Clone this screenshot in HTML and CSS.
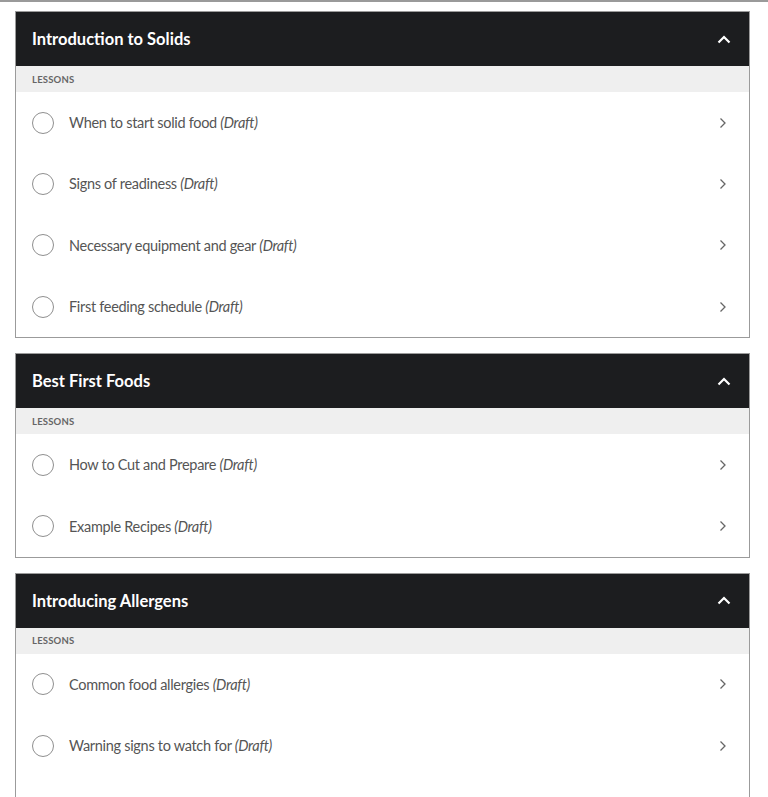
FILE: index.html
```html
<!DOCTYPE html>
<html>
<head>
<meta charset="utf-8">
<link rel="stylesheet" href="styles.css">
</head>
<body>
<div class="topline"></div>
<main class="sections">
  <section class="card">
    <header class="card-head">
      <h2>Introduction to Solids</h2>
      <svg class="up" width="14" height="9" viewBox="0 0 14 9"><path d="M1.5 7.5 L7 2 L12.5 7.5" fill="none" stroke="#fff" stroke-width="2.2"/></svg>
    </header>
    <div class="label">LESSONS</div>
    <ul class="lessons">
      <li class="lesson"><span class="dot"></span><span class="name">When to start solid food <em>(Draft)</em></span><svg class="go" width="8" height="12" viewBox="0 0 8 12"><path d="M1.5 1.5 L6 6 L1.5 10.5" fill="none" stroke="#666" stroke-width="1.3"/></svg></li>
      <li class="lesson"><span class="dot"></span><span class="name">Signs of readiness <em>(Draft)</em></span><svg class="go" width="8" height="12" viewBox="0 0 8 12"><path d="M1.5 1.5 L6 6 L1.5 10.5" fill="none" stroke="#666" stroke-width="1.3"/></svg></li>
      <li class="lesson"><span class="dot"></span><span class="name">Necessary equipment and gear <em>(Draft)</em></span><svg class="go" width="8" height="12" viewBox="0 0 8 12"><path d="M1.5 1.5 L6 6 L1.5 10.5" fill="none" stroke="#666" stroke-width="1.3"/></svg></li>
      <li class="lesson"><span class="dot"></span><span class="name">First feeding schedule <em>(Draft)</em></span><svg class="go" width="8" height="12" viewBox="0 0 8 12"><path d="M1.5 1.5 L6 6 L1.5 10.5" fill="none" stroke="#666" stroke-width="1.3"/></svg></li>
    </ul>
  </section>
  <section class="card">
    <header class="card-head">
      <h2>Best First Foods</h2>
      <svg class="up" width="14" height="9" viewBox="0 0 14 9"><path d="M1.5 7.5 L7 2 L12.5 7.5" fill="none" stroke="#fff" stroke-width="2.2"/></svg>
    </header>
    <div class="label">LESSONS</div>
    <ul class="lessons">
      <li class="lesson"><span class="dot"></span><span class="name">How to Cut and Prepare <em>(Draft)</em></span><svg class="go" width="8" height="12" viewBox="0 0 8 12"><path d="M1.5 1.5 L6 6 L1.5 10.5" fill="none" stroke="#666" stroke-width="1.3"/></svg></li>
      <li class="lesson"><span class="dot"></span><span class="name">Example Recipes <em>(Draft)</em></span><svg class="go" width="8" height="12" viewBox="0 0 8 12"><path d="M1.5 1.5 L6 6 L1.5 10.5" fill="none" stroke="#666" stroke-width="1.3"/></svg></li>
    </ul>
  </section>
  <section class="card">
    <header class="card-head">
      <h2>Introducing Allergens</h2>
      <svg class="up" width="14" height="9" viewBox="0 0 14 9"><path d="M1.5 7.5 L7 2 L12.5 7.5" fill="none" stroke="#fff" stroke-width="2.2"/></svg>
    </header>
    <div class="label">LESSONS</div>
    <ul class="lessons lessons-open">
      <li class="lesson"><span class="dot"></span><span class="name">Common food allergies <em>(Draft)</em></span><svg class="go" width="8" height="12" viewBox="0 0 8 12"><path d="M1.5 1.5 L6 6 L1.5 10.5" fill="none" stroke="#666" stroke-width="1.3"/></svg></li>
      <li class="lesson"><span class="dot"></span><span class="name">Warning signs to watch for <em>(Draft)</em></span><svg class="go" width="8" height="12" viewBox="0 0 8 12"><path d="M1.5 1.5 L6 6 L1.5 10.5" fill="none" stroke="#666" stroke-width="1.3"/></svg></li>
    </ul>
  </section>
</main>
</body>
</html>
```

FILE: styles.css
```css
* { box-sizing: border-box; }
html, body { margin: 0; padding: 0; background: #fff; }
body {
  font-family: Lato, "Open Sans", "Liberation Sans", sans-serif;
  color: #555;
}
.topline {
  height: 2px;
  background: #9a9a9a;
}
.sections {
  display: flex;
  flex-direction: column;
  gap: 15px;
  padding: 9px 18px 0 15px;
}
.card {
  border: 1px solid #9b9b9b;
  background: #fff;
}
.card-head {
  height: 54px;
  background: #1c1d1f;
  display: flex;
  align-items: center;
  justify-content: space-between;
  padding: 0 18px 0 16px;
}
.card-head h2 {
  margin: 0;
  color: #fff;
  font-size: 16.5px;
  font-weight: 700;
  letter-spacing: 0;
}
.up { display: block; }
.label {
  height: 26px;
  background: #efefef;
  display: flex;
  align-items: center;
  padding-left: 16px;
  font-size: 9.5px;
  font-weight: 700;
  color: #666;
  letter-spacing: 0.2px;
}
.lessons {
  list-style: none;
  margin: 0;
  padding: 0;
}
.lessons-open { padding-bottom: 40px; }
.lesson {
  height: 61.3px;
  display: flex;
  align-items: center;
  padding: 0 22px 0 16px;
}
.dot {
  width: 22px;
  height: 22px;
  border: 1px solid #8f8f8f;
  border-radius: 50%;
  flex: none;
}
.name {
  margin-left: 15px;
  flex: 1;
  font-size: 14.5px;
  letter-spacing: -0.3px;
  color: #555;
}
.name em { font-style: italic; }
.go { display: block; flex: none; }
```
